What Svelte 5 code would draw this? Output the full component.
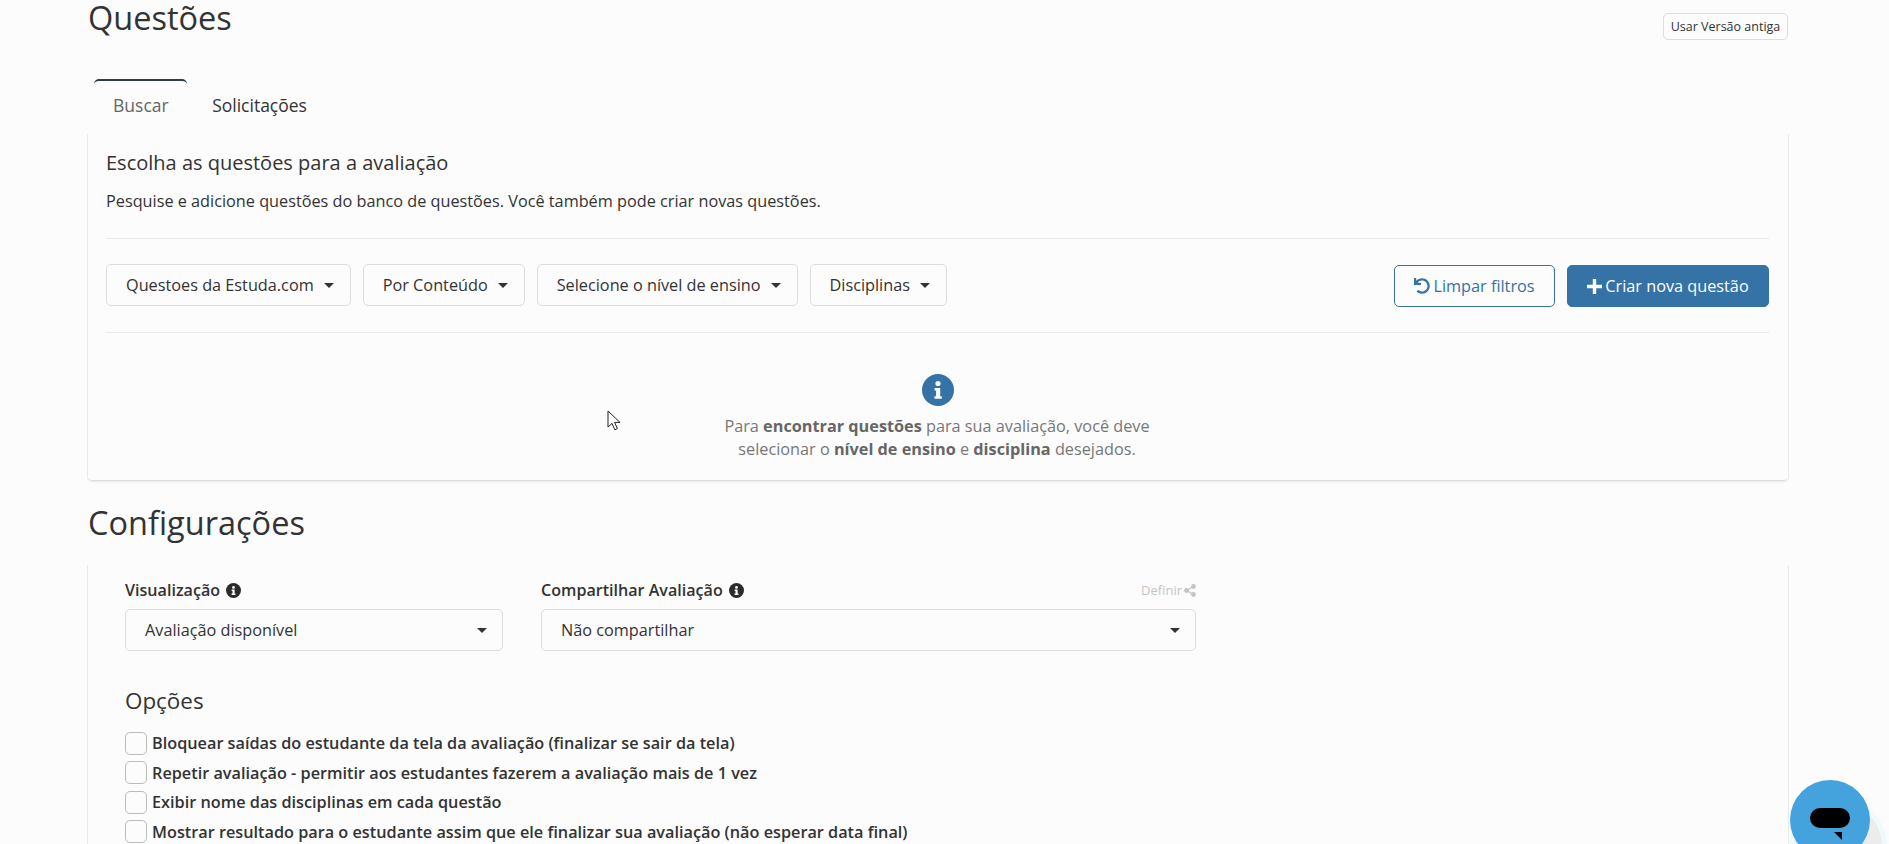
<script>
  const filters = ["Questoes da Estuda.com", "Por Conteúdo", "Selecione o nível de ensino", "Disciplinas"];
  const options = [
    "Bloquear saídas do estudante da tela da avaliação (finalizar se sair da tela)",
    "Repetir avaliação - permitir aos estudantes fazerem a avaliação mais de 1 vez",
    "Exibir nome das disciplinas em cada questão",
    "Mostrar resultado para o estudante assim que ele finalizar sua avaliação (não esperar data final)",
  ];
</script>

<div class="page">
  <div class="title-row">
    <h1>Questões</h1>
    <button class="old">Usar Versão antiga</button>
  </div>

  <div class="tabs">
    <div class="tab active">Buscar</div>
    <div class="tab">Solicitações</div>
  </div>

  <section class="panel first">
    <h2>Escolha as questões para a avaliação</h2>
    <p class="lead">Pesquise e adicione questões do banco de questões. Você também pode criar novas questões.</p>
    <div class="toolbar">
      {#each filters as f}
        <button class="filter">{f}<span class="caret"></span></button>
      {/each}
      <span class="spacer"></span>
      <button class="btn outline">
        <svg width="16" height="16" viewBox="0 0 512 512"><path fill="currentColor" d="M212.3 224.3H12c-6.6 0-12-5.4-12-12V12C0 5.4 5.4 0 12 0h48c6.6 0 12 5.4 12 12v78.1C117.8 39.3 184.3 7.5 258.2 8c136.9 1 246.4 111.6 245.8 248.5C503.4 393.1 392.5 504 256 504c-63.9 0-122.2-24.3-166.2-64.2-5.1-4.6-5.3-12.6-.5-17.4l34-34c4.5-4.5 11.7-4.7 16.4-.5C170.8 415.3 211.6 432 256 432c97.3 0 176-78.7 176-176 0-97.3-78.7-176-176-176-58.5 0-110.3 28.5-142.3 72.3h98.3c6.6 0 12 5.4 12 12v48c0 6.6-5.4 12-12 12z"/></svg>
        Limpar filtros
      </button>
      <button class="btn primary">
        <svg width="15" height="15" viewBox="0 0 14 14"><path fill="currentColor" d="M5.4 0h3.2v5.4H14v3.2H8.6V14H5.4V8.6H0V5.4h5.4z"/></svg>
        Criar nova questão
      </button>
    </div>
    <div class="notice">
      <svg class="info-big" width="32" height="32" viewBox="0 0 32 32">
        <circle cx="16" cy="16" r="16" fill="#3572a5"/>
        <circle cx="16" cy="9.5" r="2.6" fill="#fcfcfc"/>
        <path fill="#fcfcfc" d="M12.6 14h5.6v8.2h1.6v2.6h-7.4v-2.6h1.7v-5.6h-1.5z"/>
      </svg>
      <p>Para <b>encontrar questões</b> para sua avaliação, você deve<br />selecionar o <b>nível de ensino</b> e <b>disciplina</b> desejados.</p>
    </div>
  </section>

  <h1 class="config">Configurações</h1>

  <section class="panel second">
    <div class="fields">
      <div class="field small">
        <div class="label">
          <span>Visualização</span>
          <svg width="15" height="15" viewBox="0 0 32 32"><circle cx="16" cy="16" r="16" fill="#2b2b2b"/><circle cx="16" cy="9.5" r="3" fill="#fcfcfc"/><path fill="#fcfcfc" d="M12 14h6.4v8.4h1.8v3h-8.4v-3h2v-5.4h-1.8z"/></svg>
        </div>
        <div class="select">Avaliação disponível<span class="caret"></span></div>
      </div>
      <div class="field large">
        <div class="label">
          <span>Compartilhar Avaliação</span>
          <svg width="15" height="15" viewBox="0 0 32 32"><circle cx="16" cy="16" r="16" fill="#2b2b2b"/><circle cx="16" cy="9.5" r="3" fill="#fcfcfc"/><path fill="#fcfcfc" d="M12 14h6.4v8.4h1.8v3h-8.4v-3h2v-5.4h-1.8z"/></svg>
          <span class="define">Definir
            <svg width="12" height="13" viewBox="0 0 12 13"><circle cx="9.5" cy="2.5" r="2.4" fill="currentColor"/><circle cx="2.5" cy="6.5" r="2.4" fill="currentColor"/><circle cx="9.5" cy="10.5" r="2.4" fill="currentColor"/><path d="M9.5 2.5l-7 4 7 4" fill="none" stroke="currentColor" stroke-width="1.2"/></svg>
          </span>
        </div>
        <div class="select">Não compartilhar<span class="caret"></span></div>
      </div>
    </div>
    <h3>Opções</h3>
    {#each options as o}
      <div class="check"><span class="box"></span><span>{o}</span></div>
    {/each}
  </section>
</div>

<svg class="cursor" width="14" height="22" viewBox="0 0 14 22"><path d="M1 1v16l4-3.6 2.8 6.4 2.6-1.2-2.8-6.2H13z" fill="#fff" stroke="#222" stroke-width="1"/></svg>

<div class="chat">
  <div class="chat-glow"></div>
  <div class="chat-btn">
    <div class="pill"></div>
    <div class="tail"></div>
  </div>
</div>

<style>
  :global(body) {
    background: #fcfcfc;
    overflow: hidden;
  }
  .page {
    box-sizing: border-box;
    width: 1702px;
    height: 844px;
    margin-left: 87px;
    padding: 0 1px;
    overflow: hidden;
    font-family: "Open Sans", sans-serif;
    color: #333;
    font-size: 16.25px;
  }
  .title-row {
    display: flex;
    justify-content: space-between;
    height: 79px;
  }
  h1 {
    margin: 0;
    font-size: 32.5px;
    font-weight: 400;
    line-height: 36px;
  }
  .old {
    align-self: flex-start;
    margin-top: 13px;
    height: 27px;
    width: 125px;
    padding: 0;
    background: transparent;
    border: 1px solid #ddd;
    border-radius: 5px;
    font: 12.5px "Open Sans", sans-serif;
    color: #333;
  }
  .tabs {
    display: flex;
    gap: 6px;
    padding-left: 6px;
    height: 55px;
  }
  .tab {
    padding: 11px 18.5px 0 19px;
    font-size: 17.5px;
    line-height: 26px;
    border-top: 2px solid transparent;
    border-radius: 5px 5px 0 0;
    color: #333;
  }
  .tab.active {
    border-top-color: #2f3d4a;
    color: #666;
  }
  .panel {
    margin: 0 -1px;
    border-left: 1px solid #eaeaea;
    border-right: 1px solid #eaeaea;
    padding: 0 19px 0 18px;
  }
  .first {
    height: 347px;
    box-sizing: border-box;
    border-bottom: 1px solid #ddd;
    border-radius: 0 0 5px 5px;
    box-shadow: 0 1px 2px rgba(0, 0, 0, 0.08);
    padding-top: 16px;
  }
  h2 {
    margin: 0;
    font-size: 20px;
    font-weight: 400;
    line-height: 26px;
  }
  .lead {
    margin: 13px 0 0;
    line-height: 24px;
    padding-bottom: 25px;
    border-bottom: 1px solid #eaeaea;
  }
  .toolbar {
    display: flex;
    align-items: flex-start;
    gap: 12px;
    padding: 26px 0 25px;
    border-bottom: 1px solid #eaeaea;
  }
  .spacer {
    flex: 1;
  }
  button {
    cursor: pointer;
  }
  .filter {
    display: flex;
    align-items: center;
    height: 42px;
    margin-top: -1px;
    margin-bottom: 1px;
    padding: 0 16px 0 19px;
    background: transparent;
    border: 1px solid #ddd;
    border-radius: 5px;
    font: 16.25px "Open Sans", sans-serif;
    color: #333;
  }
  .caret {
    display: inline-block;
    margin-left: 10px;
    border-left: 5px solid transparent;
    border-right: 5px solid transparent;
    border-top: 5px solid #333;
  }
  .btn {
    display: flex;
    align-items: center;
    justify-content: center;
    gap: 3px;
    height: 42px;
    box-sizing: border-box;
    border-radius: 5px;
    font: 16.25px "Open Sans", sans-serif;
    padding: 0;
  }
  .outline {
    width: 161px;
    background: transparent;
    border: 1px solid #3572a5;
    color: #3572a5;
  }
  .primary {
    width: 202px;
    background: #3572a5;
    border: 1px solid #3572a5;
    color: #fff;
  }
  .notice {
    text-align: center;
    width: 480px;
    margin: 41px 0 0 591px;
    color: #777;
  }
  .info-big {
    display: block;
    margin: 0 0 0 225px;
  }
  .notice p {
    margin: 9px 0 0;
    line-height: 23px;
  }
  .notice b {
    font-weight: 700;
    color: #666;
  }
  .config {
    margin: 24px 0 24px;
    line-height: 36px;
  }
  .second {
    padding: 14px 19px 0;
    height: 400px;
  }
  .fields {
    display: flex;
    gap: 38px;
    padding-left: 18px;
  }
  .field.small {
    width: 378px;
  }
  .field.large {
    width: 655px;
  }
  .label {
    display: flex;
    align-items: center;
    gap: 6px;
    font-weight: 600;
    font-size: 16.1px;
    line-height: 22px;
    height: 22px;
    margin-bottom: 8px;
  }
  .define {
    margin-left: auto;
    display: flex;
    align-items: center;
    gap: 2px;
    font-size: 13px;
    font-weight: 400;
    color: #c4c4c4;
  }
  .select {
    display: flex;
    justify-content: space-between;
    align-items: center;
    box-sizing: border-box;
    height: 42px;
    padding: 0 15px 0 19px;
    border: 1px solid #ddd;
    border-radius: 5px;
  }
  h3 {
    margin: 36px 0 13.5px 18px;
    font-size: 22.4px;
    font-weight: 400;
    line-height: 28px;
  }
  .check {
    display: flex;
    align-items: center;
    gap: 5px;
    margin-left: 18px;
    height: 29.5px;
    font-weight: 600;
  }
  .box {
    box-sizing: border-box;
    width: 22px;
    height: 23px;
    border: 1px solid #bbb;
    border-radius: 5px;
  }
  .cursor {
    position: fixed;
    left: 607px;
    top: 410px;
  }
  .chat {
    position: fixed;
    left: 1790px;
    top: 780px;
  }
  .chat-glow {
    position: absolute;
    left: 4px;
    top: 22px;
    width: 88px;
    height: 88px;
    border-radius: 50%;
    background: #ececec;
    box-shadow: 0 0 0 5px #eefafc;
  }
  .chat-btn {
    position: relative;
    width: 80px;
    height: 80px;
    border-radius: 50%;
    background: #44a3dc;
  }
  .pill {
    position: absolute;
    left: 20px;
    top: 28px;
    width: 40px;
    height: 20px;
    border-radius: 10px;
    background: #000;
  }
  .tail {
    position: absolute;
    left: 44px;
    top: 52px;
    border-top: 8px solid #000;
    border-left: 8px solid transparent;
  }
</style>
